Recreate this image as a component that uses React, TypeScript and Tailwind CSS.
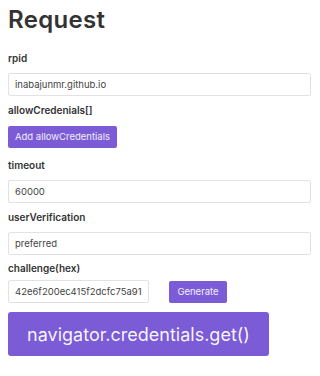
import React from 'react';

const Label = ({ children }: { children: React.ReactNode }) => (
  <div className="h-4 text-[10px] leading-4 font-semibold text-[#333] mb-1">{children}</div>
);

const Field = ({ value, className = 'w-full' }: { value: string; className?: string }) => (
  <input
    readOnly
    value={value}
    className={`h-[23px] ${className} rounded-[2px] border border-[#e2e2e2] bg-white px-[6px] text-[9.5px] text-[#444] outline-none`}
  />
);

const App: React.FC = () => {
  return (
    <div className="w-[320px] h-[376px] bg-white pl-2 pr-[9px] pt-1 font-['Inter',sans-serif]">
      <h1 className="text-[24px] leading-8 font-semibold text-[#333] tracking-[0.3px]">Request</h1>

      <div className="mt-[14px]">
        <Label>rpid</Label>
        <Field value="inabajunmr.github.io" />
      </div>

      <div className="mt-[6px]">
        <Label>allowCredenials[]</Label>
        <button className="h-[22px] w-[109px] whitespace-nowrap rounded-[2px] bg-[#7b5bd6] text-[9.5px] text-white/90">
          Add allowCredentials
        </button>
      </div>

      <div className="mt-[9px]">
        <Label>timeout</Label>
        <Field value="60000" />
      </div>

      <div className="mt-[6px]">
        <Label>userVerification</Label>
        <Field value="preferred" />
      </div>

      <div className="mt-[5px]">
        <Label>challenge(hex)</Label>
        <div className="flex items-center gap-5">
          <Field value="42e6f200ec415f2dcfc75a91b3e0c7" className="w-[141px]" />
          <button className="h-[22px] w-[58px] rounded-[2px] bg-[#7b5bd6] text-[9.5px] text-white/90">
            Generate
          </button>
        </div>
      </div>

      <button className="mt-[9px] h-[44px] w-[261px] whitespace-nowrap rounded-[3px] bg-[#7b5bd6] text-[18px] text-white/95">
        navigator.credentials.get()
      </button>
    </div>
  );
};

export default App;
